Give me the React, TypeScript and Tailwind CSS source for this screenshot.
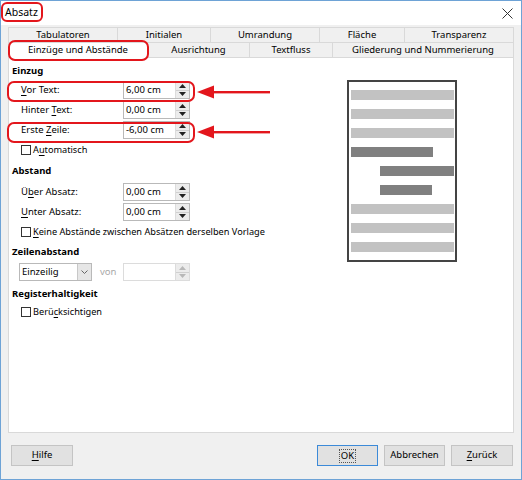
import React from 'react';

const font = { fontFamily: '"Noto Sans", "Open Sans", sans-serif' };

function U({ children }: { children: React.ReactNode }) {
  return <span className="underline underline-offset-2">{children}</span>;
}

function Spin({ disabled }: { disabled?: boolean }) {
  const c = disabled ? '#b8b8b8' : '#222';
  return (
    <div className="flex w-[14px] flex-col border-l border-[#dcdcdc] bg-[#ececec]">
      <div className="flex flex-1 items-center justify-center border-b border-[#d0d0d0]">
        <svg width="7" height="4" viewBox="0 0 7 4"><path d="M0 4 L3.5 0 L7 4 Z" fill={c} /></svg>
      </div>
      <div className="flex flex-1 items-center justify-center">
        <svg width="7" height="4" viewBox="0 0 7 4"><path d="M0 0 L3.5 4 L7 0 Z" fill={c} /></svg>
      </div>
    </div>
  );
}

function Field({ value, disabled }: { value: string; disabled?: boolean }) {
  return (
    <div className={`flex h-[18px] w-[67px] border ${disabled ? 'border-[#dcdcdc]' : 'border-[#b9b9b9]'} bg-white`}>
      <div className="flex flex-1 items-center pl-[2px] text-[9.5px] text-black">{value}</div>
      <Spin disabled={disabled} />
    </div>
  );
}

function Row({ label, value }: { label: React.ReactNode; value: string }) {
  return (
    <div className="flex h-[20px] items-center">
      <div className="w-[111px] pl-[9px] text-[9.5px]">{label}</div>
      <Field value={value} />
    </div>
  );
}

function Check({ children, h = 'h-[20px]' }: { children: React.ReactNode; h?: string }) {
  return (
    <div className={`flex ${h} items-center gap-[2px] pl-[9px] text-[9.2px]`}>
      <div className="h-[10px] w-[10px] border border-[#333] bg-white" />
      <span>{children}</span>
    </div>
  );
}

function Heading({ children, h }: { children: React.ReactNode; h: string }) {
  return <div className={`flex ${h} items-center text-[9.5px] font-bold`}>{children}</div>;
}

function Btn({ children, w, primary }: { children: React.ReactNode; w: string; primary?: boolean }) {
  return (
    <div
      className={`flex h-[21px] ${w} items-center justify-center border ${primary ? 'border-[#3c8ad8]' : 'border-[#c4c4c4]'} bg-[#e1e1e1] text-[9.5px]`}
    >
      {children}
    </div>
  );
}

const backTabs = [
  ['Tabulatoren', 'w-[109px]'],
  ['Initialen', 'w-[93px]'],
  ['Umrandung', 'w-[109px]'],
  ['Fläche', 'w-[85px]'],
  ['Transparenz', 'flex-1'],
];

const frontTabs = [
  ['Ausrichtung', 'w-[102px]'],
  ['Textfluss', 'w-[83px]'],
  ['Gliederung und Nummerierung', 'flex-1'],
];

function Arrow({ top }: { top: string }) {
  return (
    <svg className={`absolute left-[196px] ${top}`} width="74" height="14" viewBox="0 0 74 14">
      <path d="M0 7 L17 0.5 L17 13.5 Z" fill="#e3161c" />
      <rect x="15" y="6" width="58" height="2.4" fill="#e3161c" />
    </svg>
  );
}

export default function App() {
  const light = 'bg-[#c2c2c2]';
  const dark = 'bg-[#808080]';
  return (
    <div className="relative flex h-[480px] w-[522px] flex-col border border-[#6ea3d6] bg-[#f0f0f0] text-black" style={font}>
      <div className="flex h-[24px] items-center justify-between bg-white pl-[4px] pr-[8px]">
        <span className="text-[10.5px]">Absatz</span>
        <svg width="11" height="11" viewBox="0 0 11 11">
          <path d="M0.5 0.5 L10.5 10.5 M10.5 0.5 L0.5 10.5" stroke="#333" strokeWidth="1" />
        </svg>
      </div>

      <div className="flex flex-1 flex-col px-[7px] pt-[2px]">
        <div className="flex h-[15px] text-[9.5px]">
          {backTabs.map(([t, w]) => (
            <div key={t} className={`flex ${w} items-center justify-center border border-b-0 border-r-0 border-[#d9d9d9] last:border-r`}>
              {t}
            </div>
          ))}
        </div>
        <div className="flex h-[16px] text-[9.5px]">
          <div className="flex w-[140px] items-center justify-center border border-b-0 border-[#d9d9d9] bg-white">
            Einzüge und Abstände
          </div>
          {frontTabs.map(([t, w]) => (
            <div key={t} className={`flex ${w} items-center justify-center border-t border-r border-b border-[#d9d9d9]`}>
              {t}
            </div>
          ))}
        </div>

        <div className="flex h-[375px] border border-t-0 border-[#d9d9d9] bg-white">
          <div className="flex w-[338px] flex-col pl-[3px] pt-[5px]">
            <Heading h="h-[17px]">Einzug</Heading>
            <Row label={<><U>V</U>or Text:</>} value="6,00 cm" />
            <Row label={<>Hinter <U>T</U>ext:</>} value="0,00 cm" />
            <Row label={<>Erste <U>Z</U>eile:</>} value="-6,00 cm" />
            <Check>A<U>u</U>tomatisch</Check>
            <Heading h="h-[22px]">Abstand</Heading>
            <Row label={<>Ü<U>b</U>er Absatz:</>} value="0,00 cm" />
            <Row label={<><U>U</U>nter Absatz:</>} value="0,00 cm" />
            <Check><U>K</U>eine Abstände zwischen Absätzen derselben Vorlage</Check>
            <Heading h="h-[20px]">Zeilenabstand</Heading>
            <div className="flex h-[20px] items-center pl-[7px]">
              <div className="flex h-[18px] w-[73px] border border-[#b9b9b9] bg-white">
                <div className="flex flex-1 items-center pl-[2px] text-[9.5px]">Einzeilig</div>
                <div className="flex w-[14px] items-center justify-center border-l border-[#c8c8c8] bg-[#e6e6e6]">
                  <svg width="7" height="4" viewBox="0 0 7 4"><path d="M0.5 0.5 L3.5 3.5 L6.5 0.5" stroke="#666" fill="none" /></svg>
                </div>
              </div>
              <span className="w-[31px] pl-[8px] text-[9.5px] text-[#a8a8a8]">von</span>
              <Field value="" disabled />
            </div>
            <Heading h="h-[22px] pt-[2px]">Registerhaltigkeit</Heading>
            <Check h="h-[16px]">Berü<U>c</U>ksichtigen</Check>
          </div>

          <div className="pt-[22px]">
            <div className="flex h-[182px] w-[110px] flex-col gap-[9px] border-2 border-[#444] px-[2px] pt-[8px]">
              <div className={`h-[10px] w-[103px] ${light}`} />
              <div className={`h-[10px] w-[103px] ${light}`} />
              <div className={`h-[10px] w-[103px] ${light}`} />
              <div className={`h-[10px] w-[82px] ${dark}`} />
              <div className={`ml-[29px] h-[10px] w-[74px] ${dark}`} />
              <div className={`ml-[29px] h-[10px] w-[52px] ${dark}`} />
              <div className={`h-[10px] w-[103px] ${light}`} />
              <div className={`h-[10px] w-[103px] ${light}`} />
              <div className={`h-[10px] w-[103px] ${light}`} />
            </div>
          </div>
        </div>

        <div className="flex items-center pt-[12px] pl-[3px] pr-[1px]">
          <Btn w="w-[62px]"><U>H</U>ilfe</Btn>
          <div className="flex-1" />
          <div className="flex gap-[6px]">
            <Btn w="w-[61px]" primary>
              <span className="border border-dotted border-[#555] px-[1px] leading-[12px]">OK</span>
            </Btn>
            <Btn w="w-[61px]">Abbrechen</Btn>
            <Btn w="w-[62px]"><U>Z</U>urück</Btn>
          </div>
        </div>
      </div>

      <div className="absolute left-0 top-[1px] h-[20px] w-[42px] rounded-[6px] border-2 border-[#e3161c]" />
      <div className="absolute left-[7px] top-[39px] h-[21px] w-[141px] rounded-[7px] border-2 border-[#e3161c]" />
      <div className="absolute left-[6px] top-[80px] h-[21px] w-[188px] rounded-[7px] border-2 border-[#e3161c]" />
      <div className="absolute left-[6px] top-[121px] h-[21px] w-[188px] rounded-[7px] border-2 border-[#e3161c]" />
      <Arrow top="top-[84px]" />
      <Arrow top="top-[124px]" />
    </div>
  );
}
